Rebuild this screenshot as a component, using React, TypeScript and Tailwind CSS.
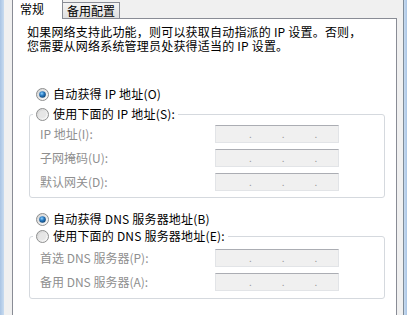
import React from 'react';

const FONT = { fontFamily: '"Noto Sans CJK SC", "Noto Sans", sans-serif' };

function Radio({ checked }: { checked?: boolean }) {
  return (
    <svg width="13" height="13" viewBox="0 0 13 13" className="shrink-0">
      <defs>
        <linearGradient id={checked ? 'rbOn' : 'rbOff'} x1="0" y1="0" x2="1" y2="1">
          <stop offset="0" stopColor="#d0d0d0" />
          <stop offset="1" stopColor="#ffffff" />
        </linearGradient>
        <radialGradient id="dot" cx="0.4" cy="0.35" r="0.7">
          <stop offset="0" stopColor="#8fd2ff" />
          <stop offset="0.45" stopColor="#2a7bc2" />
          <stop offset="1" stopColor="#0c3f6e" />
        </radialGradient>
      </defs>
      <circle cx="6.5" cy="6.5" r="6" fill={`url(#${checked ? 'rbOn' : 'rbOff'})`} stroke="#8e8f8f" strokeWidth="1" />
      {checked ? (
        <circle cx="6.5" cy="6.5" r="3.3" fill="url(#dot)" />
      ) : (
        <circle cx="6.5" cy="6.5" r="3.5" fill="#e6e6e6" />
      )}
    </svg>
  );
}

function IpBox() {
  return (
    <div className="w-[124px] h-[18px] bg-[#f0f0f0] border border-[#e2e4e7] border-t-[#abadb3] flex items-end pb-[3px]">
      <div className="flex gap-[30px] ml-[33px] text-[#9a9a9a] text-[10px] leading-[10px]">
        <span>.</span>
        <span>.</span>
        <span>.</span>
      </div>
    </div>
  );
}

function Field({ label }: { label: string }) {
  return (
    <div className="flex items-center">
      <span className="w-[182px] pl-[7px] text-[#8f8f8f]">{label}</span>
      <IpBox />
    </div>
  );
}

export default function App() {
  return (
    <div className="w-[407px] h-[315px] overflow-hidden flex bg-[#f0f0f0] text-[12px] text-black" style={FONT}>
      <div className="w-[4px] bg-gradient-to-r from-[#a9c4e4] to-[#c9dcf0]" />
      <div className="flex-1 flex flex-col pl-[8px] pr-[6px]">
        <div className="flex items-end h-[19px] relative z-10 -mb-px">
          <div className="w-[51px] h-[20px] bg-white border-l border-r border-[#898c95] pl-[7px] pt-[3px] leading-[14px]">
            常规
          </div>
          <div className="w-[57px] h-[17px] bg-gradient-to-b from-[#f4f4f4] to-[#e0e0e0] border-t border-r border-[#898c95] border-b text-center leading-[15px]">
            备用配置
          </div>
        </div>
        <div className="flex-1 bg-white border border-b-0 border-[#898c95] pt-[6px]">
          <p className="pl-[14px] leading-[14px] tracking-[0.2px]">
            如果网络支持此功能，则可以获取自动指派的 IP 设置。否则，
            <br />
            您需要从网络系统管理员处获得适当的 IP 设置。
          </p>

          <div className="mt-[33px] flex items-center gap-[4px] pl-[23px] h-[16px] leading-[16px] tracking-[0.2px]">
            <Radio checked />
            <span>自动获得 IP 地址(O)</span>
          </div>
          <fieldset className="mt-[4px] ml-[16px] mr-[11px] border border-[#d5d9de] rounded-[3px] pl-[3px]">
            <legend className="px-[3px] flex items-center gap-[4px] h-[16px] leading-[16px] tracking-[0.2px]">
              <Radio />
              <span>使用下面的 IP 地址(S):</span>
            </legend>
            <div className="flex flex-col gap-[6px] pt-[3px] pb-[6px]">
              <Field label="IP 地址(I):" />
              <Field label="子网掩码(U):" />
              <Field label="默认网关(D):" />
            </div>
          </fieldset>

          <div className="mt-[13px] flex items-center gap-[4px] pl-[23px] h-[16px] leading-[16px] tracking-[0.2px]">
            <Radio checked />
            <span>自动获得 DNS 服务器地址(B)</span>
          </div>
          <fieldset className="mt-[1px] ml-[16px] mr-[11px] border border-[#d5d9de] rounded-[3px] pl-[3px]">
            <legend className="px-[3px] flex items-center gap-[4px] h-[16px] leading-[16px] tracking-[0.2px]">
              <Radio />
              <span>使用下面的 DNS 服务器地址(E):</span>
            </legend>
            <div className="flex flex-col gap-[6px] pt-[5px] pb-[7px]">
              <Field label="首选 DNS 服务器(P):" />
              <Field label="备用 DNS 服务器(A):" />
            </div>
          </fieldset>
        </div>
      </div>
      <div className="w-[1px] bg-[#7f8c99]" />
      <div className="w-[3px] bg-gradient-to-r from-[#c9dcf0] to-[#a9c4e4]" />
    </div>
  );
}
